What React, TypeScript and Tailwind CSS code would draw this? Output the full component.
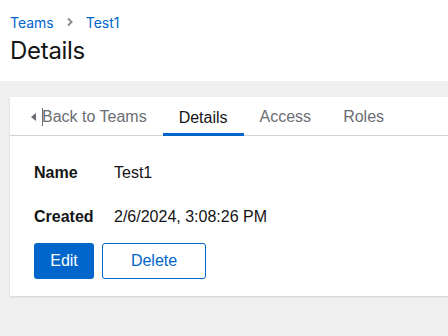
import React from 'react';

const tabs = ['Details', 'Access', 'Roles'];

export default function App() {
  return (
    <div className="w-[448px] h-[336px] overflow-hidden bg-[#f0f0f0] font-['Liberation_Sans',Arial,sans-serif]">
      {/* page header */}
      <div className="bg-white h-[81px] px-[10px] pt-[12px]">
        <div className="flex items-center text-[14px] text-[#0066cc] font-['Inter',sans-serif] h-[20px]">
          <span>Teams</span>
          <svg className="mx-[12px]" width="8" height="10" viewBox="0 0 8 10">
            <path d="M2 1.5 L5.5 5 L2 8.5" fill="none" stroke="#8a8d90" strokeWidth="2" />
          </svg>
          <span>Test1</span>
        </div>
        <h1 className="mt-[3px] text-[24px] leading-[32px] tracking-[-0.3px] text-[#151515] font-['Inter',sans-serif]">Details</h1>
      </div>

      {/* card */}
      <div className="mt-[16px] ml-[10px] w-[460px] bg-white shadow-[0_1px_2px_rgba(0,0,0,0.12)]">
        <div className="flex h-[39px] border-b border-[#d2d2d2] text-[16px] pl-[21px]">
          <div className="flex items-center pr-[16px] pt-[2px] text-[#6a6e73]">
            <svg width="5" height="8" viewBox="0 0 5 8" className="mr-[6px]">
              <path d="M5 0 L0 4 L5 8 Z" fill="#6a6e73" />
            </svg>
            <span className="w-px h-[18px] bg-[#6a6e73] mr-[-1px]" />
            <span>Back to Teams</span>
          </div>
          {tabs.map((t, i) => (
            <div
              key={t}
              className={
                'flex items-center px-[16px] ' +
                (i === 0
                  ? 'text-[#151515] border-b-[3px] border-[#0066cc] pt-[5px] mb-[-1px]'
                  : 'text-[#6a6e73] pt-[2px]')
              }
            >
              {t}
            </div>
          ))}
        </div>

        <div className="pl-[24px] pt-[25px] pb-[17px] text-[16px] text-[#151515]">
          <div className="flex h-[24px] items-center">
            <span className="w-[80px] font-bold">Name</span>
            <span>Test1</span>
          </div>
          <div className="flex h-[24px] items-center mt-[20px]">
            <span className="w-[80px] font-bold">Created</span>
            <span>2/6/2024, 3:08:26 PM</span>
          </div>
          <div className="flex gap-[8px] mt-[14px]">
            <button className="w-[60px] h-[36px] rounded-[3px] bg-[#0066cc] text-white">Edit</button>
            <button className="w-[104px] h-[36px] rounded-[3px] border border-[#0066cc] text-[#0066cc]">Delete</button>
          </div>
        </div>
      </div>
    </div>
  );
}
